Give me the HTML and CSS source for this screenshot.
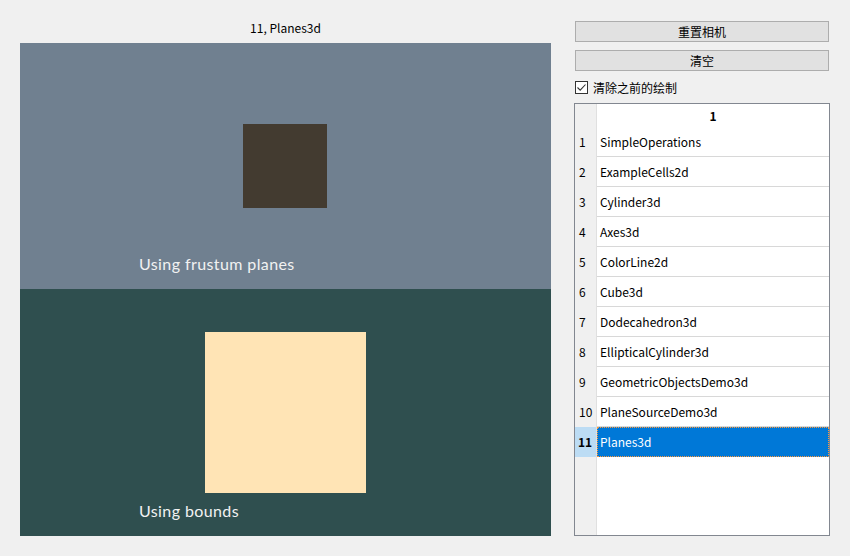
FILE: index.html
```html
<!DOCTYPE html>
<html>
<head>
<meta charset="utf-8">
<link rel="stylesheet" href="styles.css">
</head>
<body>
<div class="app">
  <div class="viewer">
    <div class="title">11, Planes3d</div>
    <div class="canvas">
      <div class="pane pane-top">
        <div class="sq sq-dark"></div>
        <div class="label">Using frustum planes</div>
      </div>
      <div class="pane pane-bottom">
        <div class="sq sq-light"></div>
        <div class="label">Using bounds</div>
      </div>
    </div>
  </div>
  <div class="side">
    <button class="btn">重置相机</button>
    <button class="btn">清空</button>
    <label class="check">
      <span class="box"><svg width="11" height="11" viewBox="0 0 11 11"><path d="M1.5 5.5 L4.2 8.2 L9.5 2.5" fill="none" stroke="#333" stroke-width="1.1"/></svg></span>
      <span>清除之前的绘制</span>
    </label>
    <div class="table">
      <div class="row head"><div class="rh"></div><div class="cell">1</div></div>
      <div class="row"><div class="rh">1</div><div class="cell">SimpleOperations</div></div>
      <div class="row"><div class="rh">2</div><div class="cell">ExampleCells2d</div></div>
      <div class="row"><div class="rh">3</div><div class="cell">Cylinder3d</div></div>
      <div class="row"><div class="rh">4</div><div class="cell">Axes3d</div></div>
      <div class="row"><div class="rh">5</div><div class="cell">ColorLine2d</div></div>
      <div class="row"><div class="rh">6</div><div class="cell">Cube3d</div></div>
      <div class="row"><div class="rh">7</div><div class="cell">Dodecahedron3d</div></div>
      <div class="row"><div class="rh">8</div><div class="cell">EllipticalCylinder3d</div></div>
      <div class="row"><div class="rh">9</div><div class="cell">GeometricObjectsDemo3d</div></div>
      <div class="row"><div class="rh">10</div><div class="cell">PlaneSourceDemo3d</div></div>
      <div class="row sel"><div class="rh">11</div><div class="cell">Planes3d</div></div>
      <div class="row filler"><div class="rh"></div><div class="cell"></div></div>
    </div>
  </div>
</div>
</body>
</html>
```

FILE: styles.css
```css
* { box-sizing: border-box; }
html, body { margin: 0; padding: 0; }
body {
  background: #f0f0f0;
  width: 850px;
  height: 556px;
  overflow: hidden;
  font-family: "Noto Sans CJK SC", "Noto Sans", sans-serif;
  font-size: 12px;
  color: #000;
}
.app {
  display: flex;
  padding-left: 20px;
}
.viewer {
  width: 531px;
  display: flex;
  flex-direction: column;
}
.title {
  height: 43px;
  text-align: center;
  line-height: 14px;
  padding-top: 21px;
  font-size: 12px;
}
.canvas {
  display: flex;
  flex-direction: column;
  height: 493px;
}
.pane {
  position: relative;
  flex: 0 0 auto;
}
.pane-top { height: 246px; background: #708090; }
.pane-bottom { height: 247px; background: #2f4f4f; }
.sq { position: absolute; }
.sq-dark { left: 223px; top: 81px; width: 84px; height: 84px; background: #433b30; }
.sq-light { left: 185px; top: 43px; width: 161px; height: 161px; background: #ffe4b5; }
.label {
  position: absolute;
  left: 119px;
  color: #f2f2f2;
  font-family: "Lato", "Open Sans", sans-serif;
  font-size: 16px;
  line-height: 18px;
  letter-spacing: 0.4px;
}
.pane-top .label { top: 212px; }
.pane-bottom .label { top: 213px; }

.side {
  margin-left: 23px;
  width: 256px;
  display: flex;
  flex-direction: column;
  padding-top: 21px;
}
.btn {
  margin: 0 1px;
  height: 21px;
  border: 1px solid #adadad;
  background: #e1e1e1;
  font-family: inherit;
  font-size: 12px;
  line-height: 17px;
  padding: 0;
  color: #000;
}
.btn + .btn { margin-top: 8px; }
.check {
  display: flex;
  align-items: center;
  gap: 5px;
  margin: 10px 0 0 1px;
  height: 13px;
  font-size: 12px;
}
.box {
  width: 13px;
  height: 13px;
  border: 1px solid #333;
  background: #fff;
  display: flex;
  align-items: center;
  justify-content: center;
}
.table {
  margin-top: 9px;
  height: 433px;
  border: 1px solid #828790;
  background: #fff;
  display: flex;
  flex-direction: column;
  font-size: 12px;
}
.row {
  display: flex;
  height: 30px;
  flex: 0 0 auto;
}
.rh {
  width: 22px;
  background: #f0f0f0;
  border-right: 1px solid #e0e0e0;
  padding-left: 4px;
  padding-bottom: 1px;
  display: flex;
  align-items: center;
}
.cell {
  flex: 1;
  border-bottom: 1px solid #d8d8d8;
  display: flex;
  align-items: center;
  padding-left: 3px;
  padding-bottom: 1px;
}
.row.head { height: 23px; }
.row.head .cell {
  border-bottom: none;
  justify-content: center;
  font-weight: bold;
  padding-left: 0;
}
.row.sel .rh { background: #bcdcf4; font-weight: bold; padding-left: 3px; }
.row.sel .cell {
  background: #0078d7;
  color: #fff;
  border: 1px dotted #ff9a3c;
  padding-left: 2px;
}
.row.filler { flex: 1 1 auto; }
.row.filler .cell { border-bottom: none; }
```
